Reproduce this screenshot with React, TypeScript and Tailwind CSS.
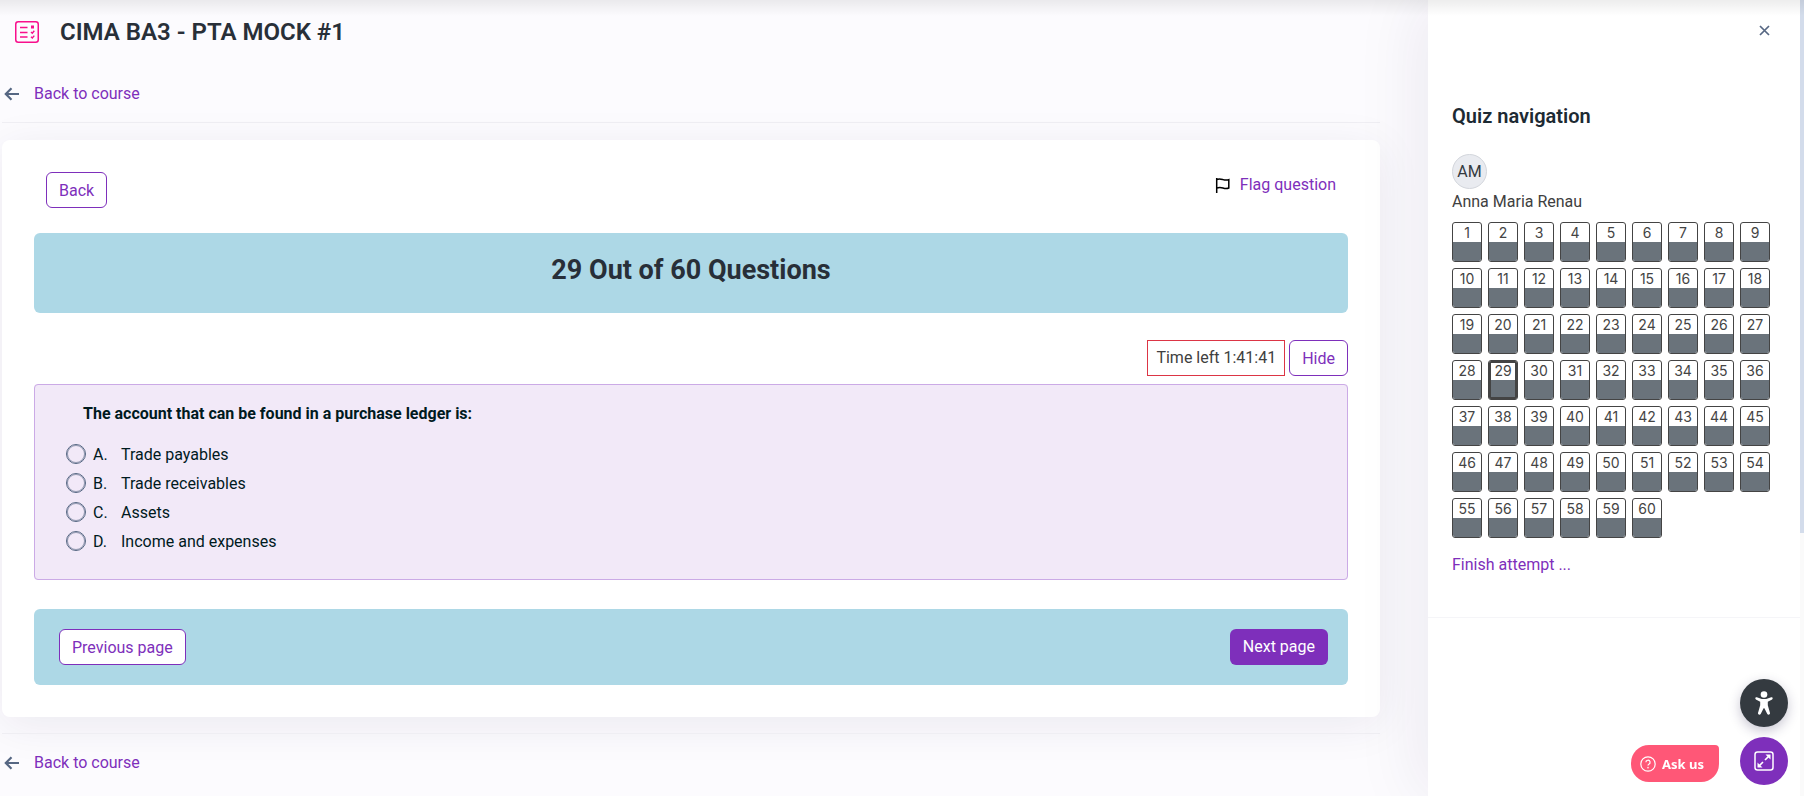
const QUESTION_COUNT = 60;
const CURRENT = 29;

const options = [
  { letter: 'A.', text: 'Trade payables' },
  { letter: 'B.', text: 'Trade receivables' },
  { letter: 'C.', text: 'Assets' },
  { letter: 'D.', text: 'Income and expenses' },
];

const outlineButton =
  'h-9 shrink-0 rounded-md border border-[#7e2fbb] bg-white px-3 pt-px text-base text-[#7e2fbb]';

function QuizIcon() {
  return (
    <svg className="h-[22px] w-6 shrink-0" viewBox="0 0 24 22" fill="none" stroke="#f80f8c">
      <rect x="0.75" y="0.75" width="22.5" height="20.5" rx="2.5" strokeWidth="1.5" />
      <path d="M5 6.5h7.5M5 11.5h7.5M5 16h7.5" strokeWidth="1.4" />
      <rect x="16.5" y="5" width="2" height="2" fill="#f80f8c" strokeWidth="1" />
      <path d="M16 11l1.3 1.2 2-2.4M16 15.8l1.3 1.2 2-2.4" strokeWidth="1.4" />
    </svg>
  );
}

function BackToCourse() {
  return (
    <a href="#course" className="flex w-fit items-center pl-0.5 text-[#7e2fbb]">
      <svg className="mr-[14px] h-4 w-4" viewBox="0 0 16 16" fill="none" stroke="#566783" strokeWidth="2.2">
        <path d="M15 8H2M7.5 2.2L1.8 8l5.7 5.8" />
      </svg>
      Back to course
    </a>
  );
}

function FlagIcon() {
  return (
    <svg className="h-4 w-4" viewBox="0 0 16 16" fill="none" stroke="#000" strokeWidth="1.5">
      <path d="M1.7 1v15M1.7 2.6c2.4-1.4 4.4-.6 6.3 0s3.8.8 5.8 0v8.4c-2 .9-4 .6-5.8 0s-3.9-1.1-6.3.2" />
    </svg>
  );
}

function Question() {
  return (
    <fieldset className="mt-2 rounded-sm border border-[#cbaae6] bg-[#f2e9f8] px-[31px] pt-[15px] pb-[23px] text-[#001a1e]">
      <legend className="float-left mb-3 w-full pl-[17px] leading-7 font-bold">
        The account that can be found in a purchase ledger is:
      </legend>
      <div className="clear-both">
        {options.map((o) => (
          <label key={o.letter} className="flex h-[29px] items-center">
            <input
              type="radio"
              name="answer"
              className="mr-[7px] mb-0.5 size-5 appearance-none rounded-full border border-[#566783] ring-1 ring-[#566783]/60 ring-inset"
            />
            <span className="w-7">{o.letter}</span>
            {o.text}
          </label>
        ))}
      </div>
    </fieldset>
  );
}

function QuizCard() {
  return (
    <section className="mt-[17px] rounded-lg bg-white px-8 py-8 shadow-[0_8px_44px_rgba(40,30,80,0.08)]">
      <div className="flex h-[61px] items-start justify-between px-3">
        <button className={outlineButton}>Back</button>
        <a href="#flag" className="flex items-center gap-[9px] pt-px text-[#7e2fbb]">
          <FlagIcon />
          Flag question
        </a>
      </div>
      <h2 className="h-20 rounded-md bg-[#add8e6] pt-[21px] text-center text-[27px] leading-8 font-bold text-[#282f38]">
        29 Out of 60 Questions
      </h2>
      <div className="mt-[27px] flex justify-end gap-1">
        <div className="h-9 border border-[#dc3545] px-2 pt-px leading-8 text-[#404040]">Time left 1:41:41</div>
        <button className={outlineButton}>Hide</button>
      </div>
      <Question />
      <div className="mt-[29px] flex h-[76px] items-center justify-between rounded-md bg-[#add8e6] pr-5 pl-[25px]">
        <button className={outlineButton}>Previous page</button>
        <button className="h-9 rounded-md bg-[#7e2fbb] px-[13px] text-base text-white">Next page</button>
      </div>
    </section>
  );
}

function QuizNavigation() {
  return (
    <aside className="relative w-[372px] shrink-0 bg-white shadow-[-8px_0_64px_rgba(40,30,80,0.08)]">
      <div className="h-[618px] border-b border-[#f5f5f8] px-6 pt-[18px]">
        <button aria-label="Close" className="ml-auto flex size-6 items-center justify-center">
          <svg className="size-[11px]" viewBox="0 0 11 11" stroke="#566783" strokeWidth="1.7">
            <path d="M1 1l9 9M10 1l-9 9" />
          </svg>
        </button>
        <h2 className="mt-[60px] text-xl leading-7 font-semibold text-[#1d2a33]">Quiz navigation</h2>
        <div className="mt-6 flex size-[35px] items-center justify-center rounded-full border border-[#d3d6dc] bg-[#e9ebf0] text-[#343a40]">
          AM
        </div>
        <p className="pt-px text-[#404040]">Anna Maria Renau</p>
        <nav className="mt-2 flex flex-wrap gap-1.5">
          {Array.from({ length: QUESTION_COUNT }, (_, i) => i + 1).map((n) => (
            <a
              key={n}
              href={`#q${n}`}
              className="relative flex h-10 w-[30px] flex-col overflow-hidden rounded-[3px] border border-[#444] bg-white text-center font-[Inter,sans-serif] text-sm text-[#444]"
            >
              <span className="h-[19px] leading-5">{n}</span>
              <span className="flex-1 bg-[#6a737b]" />
              {n === CURRENT && <span className="absolute inset-0 border-2 border-[#444]" />}
            </a>
          ))}
        </nav>
        <a href="#finish" className="mt-[15px] block w-fit text-[#7e2fbb]">
          Finish attempt ...
        </a>
      </div>
    </aside>
  );
}

function FloatingButtons() {
  return (
    <div className="fixed right-4 bottom-[11px] flex items-end gap-[21px]">
      <button className="mb-[3px] flex h-[37px] items-center gap-[6px] rounded-[18px] rounded-tr-[4px] bg-[#ff5777] pr-[15px] pl-[9px] font-['Noto_Sans',sans-serif] text-[13px] font-bold text-white">
        <svg className="size-4" viewBox="0 0 16 16" fill="none" stroke="#fff" strokeWidth="1.2">
          <circle cx="8" cy="8" r="7.2" />
          <path d="M5.9 6.3a2.1 2.1 0 1 1 3 1.9c-.7.4-.9.7-.9 1.400" />
          <circle cx="8" cy="11.6" r=".3" />
        </svg>
        Ask us
      </button>
      <div className="flex flex-col gap-[10px]">
        <button
          aria-label="Accessibility"
          className="flex size-12 items-center justify-center rounded-full bg-[#343a40] shadow-[0_4px_12px_rgba(40,30,80,0.25)]"
        >
          <svg className="h-6 w-[18px]" viewBox="0 0 18 24" fill="#fff">
            <circle cx="9" cy="3.5" r="3.3" />
            <path d="M1.8 6.2l5 1.9h4.4l5-1.9c1.4-.3 2.1 1.4.9 2.2l-4.3 2.3v3.6l2.2 7.7c.3 1.6-1.9 2.3-2.7.9L9.400 17.2h-.8L5.700 22.9c-.8 1.400-3 .7-2.700-.9l2.200-7.700v-3.600L.9 8.400C-.3 7.600.4 5.900 1.800 6.200z" />
          </svg>
        </button>
        <button aria-label="Full screen" className="flex size-12 items-center justify-center rounded-full bg-[#7e2fbb]">
          <svg className="size-5" viewBox="0 0 20 20" fill="none" stroke="#fff" strokeWidth="1.5">
            <rect x="1" y="1" width="18" height="18" rx="2.5" />
            <path d="M11 9l4-4M9 11l-4 4" strokeWidth="1.7" />
            <path d="M11.500 3.500h5v5zM3.500 11.500v5h5z" fill="#fff" stroke="none" />
          </svg>
        </button>
      </div>
    </div>
  );
}

export default function App() {
  return (
    <div className="relative flex min-h-screen bg-[#fcfbfe] font-[Roboto,sans-serif] text-base leading-6">
      <main className="min-w-0 flex-1 pr-12 pl-0.5">
        <header className="flex items-center gap-[21px] pt-4 pl-[13px]">
          <QuizIcon />
          <h1 className="text-2xl leading-8 font-semibold text-[#282f38]">CIMA BA3 - PTA MOCK #1</h1>
        </header>
        <div className="mt-[34px] border-b border-[#f0eff4] pb-4">
          <BackToCourse />
        </div>
        <QuizCard />
        <footer className="mt-4 border-t border-[#efeef3] pt-[17px]">
          <BackToCourse />
        </footer>
      </main>
      <QuizNavigation />
      <div className="relative w-1 shrink-0 bg-[#fafafa]">
        <div className="h-[533px] bg-[#d3dceb]" />
      </div>
      <div className="pointer-events-none absolute inset-x-0 top-0 h-4 bg-linear-to-b from-black/7 to-transparent" />
      <FloatingButtons />
    </div>
  );
}
